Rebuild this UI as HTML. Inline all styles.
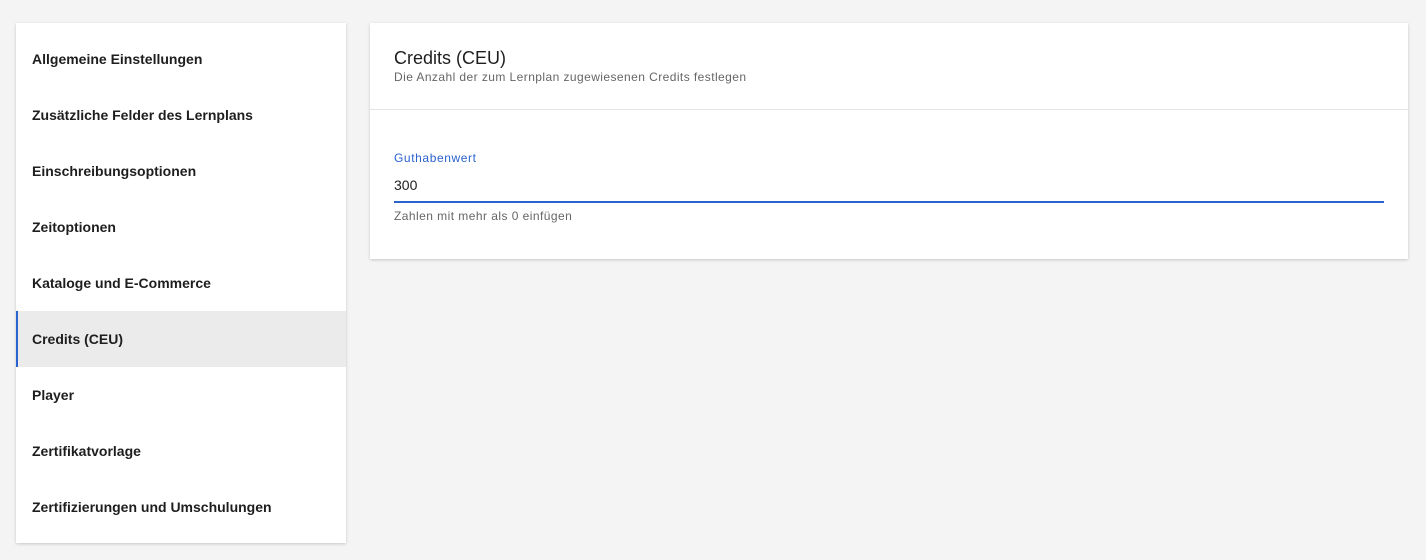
<!DOCTYPE html>
<html><head><style>
body{margin:0;background:#f4f4f4;font-family:"Liberation Sans",sans-serif;width:1426px;height:560px;position:relative;overflow:hidden}
.side{position:absolute;left:16px;top:23px;width:330px;height:520px;background:#fff;box-shadow:0 1px 3px rgba(0,0,0,.18)}
.it{position:absolute;left:0;width:330px;height:56px;line-height:56px;padding-left:16px;box-sizing:border-box;font-size:14px;font-weight:bold;color:#1e1e1e}
.act{background:#ebebeb;border-left:2px solid #2a62d0;padding-left:14px}
.card{position:absolute;left:370px;top:23px;width:1038px;height:236px;background:#fff;box-shadow:0 1px 3px rgba(0,0,0,.18)}
.t{position:absolute;left:24px;top:25px;font-size:18px;color:#1e1e1e}
.s{position:absolute;left:24px;top:47px;font-size:12px;color:#666;letter-spacing:.43px}
.hr{position:absolute;left:0;right:0;top:86px;border-top:1px solid #e4e4e4}
.l{position:absolute;left:24px;top:128px;font-size:12px;color:#2a62d0;letter-spacing:.6px}
.v{position:absolute;left:24px;top:154px;font-size:14px;color:#1e1e1e}
.u{position:absolute;left:24px;width:990px;top:178px;height:2px;background:#2a62d0}
.h{position:absolute;left:24px;top:186px;font-size:12px;color:#666;letter-spacing:.45px}
</style></head><body>
<div class="side">
<div class="it" style="top:8px">Allgemeine Einstellungen</div>
<div class="it" style="top:64px">Zusätzliche Felder des Lernplans</div>
<div class="it" style="top:120px">Einschreibungsoptionen</div>
<div class="it" style="top:176px">Zeitoptionen</div>
<div class="it" style="top:232px">Kataloge und E-Commerce</div>
<div class="it act" style="top:288px">Credits (CEU)</div>
<div class="it" style="top:344px">Player</div>
<div class="it" style="top:400px">Zertifikatvorlage</div>
<div class="it" style="top:456px">Zertifizierungen und Umschulungen</div>
</div>
<div class="card">
<div class="t">Credits (CEU)</div>
<div class="s">Die Anzahl der zum Lernplan zugewiesenen Credits festlegen</div>
<div class="hr"></div>
<div class="l">Guthabenwert</div>
<div class="v">300</div>
<div class="u"></div>
<div class="h">Zahlen mit mehr als 0 einfügen</div>
</div>
</body></html>
